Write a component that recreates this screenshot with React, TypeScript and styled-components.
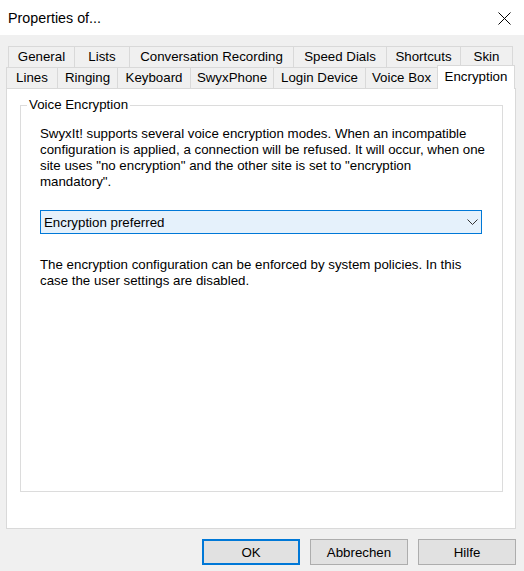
import React, { useState } from 'react';
import styled, { createGlobalStyle } from 'styled-components';

const GlobalStyle = createGlobalStyle`
  html, body {
    margin: 0;
    padding: 0;
    background: #f0f0f0;
  }
  body {
    font-family: 'Liberation Sans', Arial, sans-serif;
    font-size: 13.3px;
    color: #000;
  }
`

const Window = styled.div`
  width: 524px;
  height: 571px;
  display: flex;
  flex-direction: column;
  background: #f0f0f0;
  overflow: hidden;
`

const TitleBar = styled.div`
  height: 35px;
  flex-shrink: 0;
  background: #fff;
  display: flex;
  align-items: center;
  justify-content: space-between;
  padding: 0 13px 0 8px;
  box-sizing: border-box;
  font-size: 14.3px;
  color: #000;
`

const CloseButton = styled.div`
  width: 14px;
  height: 14px;
  display: flex;
  align-items: center;
  justify-content: center;
  margin-top: 1px;
`

const Body = styled.div`
  flex: 1;
  display: flex;
  flex-direction: column;
  padding: 11px 8px 0 6px;
`

const TabRow = styled.div<{ $indent: number }>`
  display: flex;
  align-items: flex-end;
  height: 21px;
  padding-left: ${p => p.$indent}px;
`

const Tab = styled.div<{ $width: number; $active?: boolean }>`
  box-sizing: border-box;
  width: ${p => p.$width}px;
  height: ${p => (p.$active ? 24 : 21)}px;
  margin-left: -1px;
  margin-bottom: ${p => (p.$active ? -1 : 0)}px;
  border: 1px solid #d9d9d9;
  border-bottom: none;
  background: ${p => (p.$active ? '#fff' : '#f0f0f0')};
  position: relative;
  z-index: ${p => (p.$active ? 2 : 1)};
  display: flex;
  justify-content: center;
  padding-top: ${p => (p.$active ? 3 : 2)}px;
  line-height: 16px;
  white-space: nowrap;
  &:first-child {
    margin-left: 0;
  }
`

const Panel = styled.div`
  height: 441px;
  box-sizing: border-box;
  background: #fff;
  border: 1px solid #d9d9d9;
  padding: 8px 12px 36px 13px;
  display: flex;
`

const Group = styled.fieldset`
  flex: 1;
  margin: 0;
  padding: 13px 19px 0 19px;
  border: 1px solid #dcdcdc;
  display: flex;
  flex-direction: column;
  min-width: 0;
`

const Legend = styled.legend`
  padding: 0 2px;
  margin-left: -13px;
  line-height: 16px;
`

const Text = styled.p`
  margin: 0;
  line-height: 16px;
  white-space: nowrap;
`

const Combo = styled.div`
  box-sizing: border-box;
  height: 24px;
  margin: 20px 1px 23px 0;
  border: 1px solid #0078d7;
  background: #e5f1fb;
  display: flex;
  align-items: center;
  justify-content: space-between;
  padding: 0 3px 0 3px;
  cursor: default;
`

const Footer = styled.div`
  display: flex;
  justify-content: flex-end;
  gap: 10px;
  padding: 10px 0 0;
`

const Button = styled.button<{ $primary?: boolean }>`
  box-sizing: border-box;
  width: 98px;
  height: 26px;
  margin: 0;
  padding: 0;
  background: #e1e1e1;
  border: ${p => (p.$primary ? '2px solid #0078d7' : '1px solid #adadad')};
  font-family: 'Liberation Sans', Arial, sans-serif;
  font-size: 13.3px;
  color: #000;
`

const topTabs = [
  { label: 'General', width: 67 },
  { label: 'Lists', width: 56 },
  { label: 'Conversation Recording', width: 165 },
  { label: 'Speed Dials', width: 94 },
  { label: 'Shortcuts', width: 75 },
  { label: 'Skin', width: 53 },
]

const bottomTabs = [
  { label: 'Lines', width: 52 },
  { label: 'Ringing', width: 61 },
  { label: 'Keyboard', width: 74 },
  { label: 'SwyxPhone', width: 84 },
  { label: 'Login Device', width: 93 },
  { label: 'Voice Box', width: 73 },
  { label: 'Encryption', width: 78 },
]

function App() {
  const [active] = useState('Encryption')

  return (
    <Window>
      <GlobalStyle />
      <TitleBar>
        <span>Properties of...</span>
        <CloseButton>
          <svg width="13" height="13" viewBox="0 0 13 13">
            <path d="M0.5 0.5 L12.5 12.5 M12.5 0.5 L0.5 12.5" stroke="#000" strokeWidth="1" fill="none" />
          </svg>
        </CloseButton>
      </TitleBar>
      <Body>
        <TabRow $indent={2}>
          {topTabs.map(t => (
            <Tab key={t.label} $width={t.width}>{t.label}</Tab>
          ))}
        </TabRow>
        <TabRow $indent={0}>
          {bottomTabs.map(t => (
            <Tab key={t.label} $width={t.width} $active={t.label === active}>{t.label}</Tab>
          ))}
        </TabRow>
        <Panel>
          <Group>
            <Legend>Voice Encryption</Legend>
            <Text>
              SwyxIt! supports several voice encryption modes. When an incompatible<br />
              configuration is applied, a connection will be refused. It will occur, when one<br />
              site uses "no encryption" and the other site is set to "encryption<br />
              mandatory".
            </Text>
            <Combo>
              <span>Encryption preferred</span>
              <svg width="11" height="6" viewBox="0 0 11 6">
                <path d="M0.5 0.5 L5.5 5.5 L10.5 0.5" stroke="#333" strokeWidth="1" fill="none" />
              </svg>
            </Combo>
            <Text>
              The encryption configuration can be enforced by system policies. In this<br />
              case the user settings are disabled.
            </Text>
          </Group>
        </Panel>
        <Footer>
          <Button $primary>OK</Button>
          <Button>Abbrechen</Button>
          <Button>Hilfe</Button>
        </Footer>
      </Body>
    </Window>
  )
}

export default App;
